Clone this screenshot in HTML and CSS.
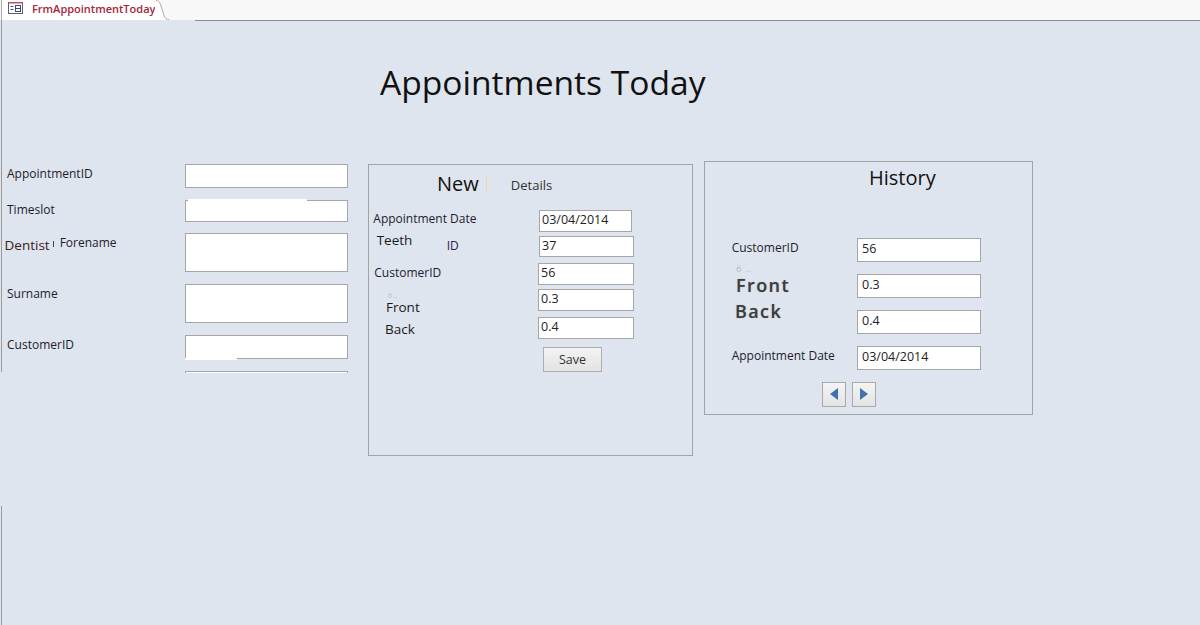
FILE: index.html
```html
<!DOCTYPE html>
<html lang="en">
<head>
<meta charset="utf-8">
<title>FrmAppointmentToday</title>
<link rel="stylesheet" href="styles.css">
</head>
<body>
<div class="tabbar">
  <div class="tab">
    <svg class="tab-icon" viewBox="0 0 15 12" width="15" height="12">
      <rect x="0.5" y="0.5" width="14" height="11" fill="#fff" stroke="#56607e"/>
      <line x1="0.5" y1="0.8" x2="14.5" y2="0.8" stroke="#c2506e" stroke-width="1.4"/>
      <line x1="2.5" y1="4.5" x2="5.5" y2="4.5" stroke="#3c4a6c"/>
      <line x1="2.5" y1="7.5" x2="5.5" y2="7.5" stroke="#3c4a6c"/>
      <rect x="7.5" y="3.5" width="5" height="6" fill="none" stroke="#3c4a6c"/>
      <line x1="7.5" y1="6.5" x2="12.5" y2="6.5" stroke="#3c4a6c"/>
    </svg>
    <span class="tab-label">FrmAppointmentToday</span>
  </div>
  <svg class="tab-edge" viewBox="0 0 14 20" width="14" height="20">
    <path d="M0 0 H1 C3.5 0 4.5 1.5 5.5 4.5 L9 15.5 C10 18.5 11.5 19.5 14 19.5 V20 H0 Z" fill="#fff"/>
    <path d="M1 0.5 C3.5 0.5 4.5 1.8 5.5 4.5 L9 15.5 C10 18.5 11.5 19.5 14 19.5" fill="none" stroke="#b3aa9c"/>
  </svg>
</div>

<div class="canvas">
  <h1 class="title">Appointments Today</h1>

  <div class="row">
    <div class="left">
      <div class="field">
        <div class="lbl">AppointmentID</div>
        <div class="box h24"></div>
      </div>
      <div class="field">
        <div class="lbl">Timeslot</div>
        <div class="box h22 patch-top"></div>
      </div>
      <div class="field gap11">
        <div class="lbl lbl-tight"><span class="dentist">Dentist</span><span class="tick"></span><span class="forename">Forename</span></div>
        <div class="box h39"></div>
      </div>
      <div class="field">
        <div class="lbl">Surname</div>
        <div class="box h39"></div>
      </div>
      <div class="field">
        <div class="lbl">CustomerID</div>
        <div class="box h24 patch-bottom"></div>
      </div>
      <div class="field">
        <div class="lbl"></div>
        <div class="box cut"></div>
      </div>
    </div>

    <div class="panel mid">
      <div class="mid-head">
        <span class="new">New</span>
        <span class="ybar"></span>
        <span class="details">Details</span>
      </div>
      <div class="mrow r-date">
        <div class="mlab"><span class="ml-date">Appointment Date</span></div>
        <div class="in mid-in w93 ml1">03/04/2014</div>
      </div>
      <div class="mrow r-id">
        <div class="mlab"><span class="teeth">Teeth</span><span class="id">ID</span></div>
        <div class="in mid-in w95 ml1">37</div>
      </div>
      <div class="mrow r-cust">
        <div class="mlab"><span class="ml-cust">CustomerID</span></div>
        <div class="in mid-in w96">56</div>
      </div>
      <div class="mrow r-front">
        <div class="mlab">
          <div class="mfront">
            <div class="dots">ö ..</div>
            <div class="big">Front</div>
          </div>
        </div>
        <div class="in mid-in w96">0.3</div>
      </div>
      <div class="mrow r-back">
        <div class="mlab"><span class="big mback">Back</span></div>
        <div class="in mid-in w96">0.4</div>
      </div>
      <div class="save">Save</div>
    </div>

    <div class="panel hist">
      <div class="hist-title">History</div>
      <div class="hrow">
        <div class="hlab"><span class="hl-cust">CustomerID</span></div>
        <div class="in hist-in">56</div>
      </div>
      <div class="hrow">
        <div class="hlab hl-front">
          <div class="hdots">ö ..</div>
          <div class="hbig">Front</div>
        </div>
        <div class="in hist-in">0.3</div>
      </div>
      <div class="hrow">
        <div class="hlab"><span class="hbig hl-back">Back</span></div>
        <div class="in hist-in">0.4</div>
      </div>
      <div class="hrow">
        <div class="hlab"><span class="hl-cust">Appointment Date</span></div>
        <div class="in hist-in">03/04/2014</div>
      </div>
      <div class="nav">
        <div class="navbtn"><svg viewBox="0 0 8 12" width="8" height="12"><polygon points="8,0 0,6 8,12" fill="#3f72b0"/></svg></div>
        <div class="navbtn"><svg viewBox="0 0 8 12" width="8" height="12"><polygon points="0,0 8,6 0,12" fill="#3f72b0"/></svg></div>
      </div>
    </div>
  </div>
</div>
</body>
</html>
```
FILE: styles.css
```css
* { box-sizing: border-box; }

body {
  margin: 0;
  width: 1200px;
  height: 625px;
  overflow: hidden;
  background: #dfe5ee;
  font-family: "Open Sans", "Noto Sans", sans-serif;
  color: #1f1f28;
}

/* ---------- tab bar ---------- */
.tabbar {
  height: 20px;
  background: #f8f8f8;
  display: flex;
}
.tab {
  margin-left: 1px;
  width: 154px;
  border-left: 1px solid #a9a9a9;
  background: #fff;
  display: flex;
  align-items: flex-start;
  padding-left: 6px;
}
.tab-icon { margin-top: 2px; flex-shrink: 0; }
.tab-label {
  margin-left: 9px;
  font-size: 11px;
  font-weight: 600;
  line-height: 18px;
  color: #a3263a;
  white-space: nowrap;
}
.tab-edge { display: block; flex-shrink: 0; }

/* ---------- form canvas ---------- */
.canvas {
  height: 605px;
  display: flex;
  flex-direction: column;
  background:
    linear-gradient(#8c8c8c, #8c8c8c) no-repeat 195px 0 / 1005px 1px,
    linear-gradient(to bottom, #9a9a9a 0 352px, transparent 352px 486px, #9a9a9a 486px) no-repeat 1px 0 / 1px 100%,
    #dfe5ee;
}
.title {
  margin: 42px 0 0 380px;
  font-size: 33.6px;
  font-weight: 400;
  line-height: 40px;
  color: #111;
}
.row {
  display: flex;
  align-items: flex-start;
  margin-top: 59px;
}

/* ---------- left column ---------- */
.left {
  margin-left: 4px;
  margin-top: 3px;
  width: 344px;
  display: flex;
  flex-direction: column;
}
.field { display: flex; align-items: flex-start; }
.field + .field { margin-top: 12px; }
.field.gap11 { margin-top: 11px; }
.lbl {
  width: 181px;
  flex-shrink: 0;
  padding-left: 3px;
  font-size: 12px;
  line-height: 20px;
  color: #1c1c2c;
  white-space: nowrap;
}
.lbl-tight { padding-left: 0; }
.dentist {
  font-size: 13.5px;
  color: #3a2020;
  vertical-align: -3px;
  margin-left: 0.5px;
}
.tick {
  display: inline-block;
  width: 1px;
  height: 6px;
  background: #444;
  margin-left: 3px;
}
.forename { margin-left: 6px; }

.box {
  width: 163px;
  background: #fff;
  border: 1px solid #a6a6a6;
  position: relative;
}
.h22 { height: 22px; }
.h24 { height: 24px; }
.h39 { height: 39px; }
.cut { height: 2px; border-bottom: none; }
.patch-top::before {
  content: "";
  position: absolute;
  top: -2px;
  left: 2px;
  width: 119px;
  height: 2px;
  background: #fff;
}
.patch-bottom::after {
  content: "";
  position: absolute;
  bottom: -2px;
  left: -1px;
  width: 52px;
  height: 2px;
  background: #fff;
}

/* ---------- panels ---------- */
.panel { border: 1px solid #a3a3a3; flex-shrink: 0; }

.mid {
  margin-left: 20px;
  margin-top: 3px;
  width: 325px;
  height: 292px;
  padding-top: 5px;
}
.mid-head {
  height: 40px;
  display: flex;
  align-items: baseline;
  padding-left: 68px;
}
.new { font-size: 20px; line-height: 28px; color: #111; }
.ybar {
  width: 1px;
  height: 14px;
  background: #e6da98;
  margin-left: 7px;
}
.details {
  margin-left: 24px;
  font-size: 13px;
  line-height: 18px;
  color: #333;
  position: relative;
  top: -1px;
}
.mrow { display: flex; align-items: flex-start; }
.r-date { height: 22px; margin-bottom: 4px; }
.r-id { height: 21px; margin-bottom: 6px; }
.r-cust { height: 22px; margin-bottom: 4px; }
.r-front { height: 22px; margin-bottom: 6px; }
.r-back { height: 22px; margin-bottom: 8px; }
.mlab {
  width: 169px;
  flex-shrink: 0;
  display: flex;
  align-items: flex-start;
  font-size: 12px;
  line-height: 18px;
  color: #1c1c2c;
  white-space: nowrap;
}
.ml-date { margin-left: 4.3px; }
.teeth {
  display: inline-block;
  width: 70px;
  margin-left: 7.7px;
  margin-top: -5px;
  font-size: 13.5px;
  color: #1a1a1a;
}
.id { margin-top: 1px; color: #2c1a4c; }
.ml-cust { margin-left: 5.3px; margin-top: 1px; }
.mfront { margin-left: 17px; }
.dots {
  margin-top: 3px;
  margin-left: 1.7px;
  height: 7px;
  font-size: 7px;
  line-height: 7px;
  color: #b8b8b8;
}
.big {
  font-size: 13.5px;
  line-height: 18px;
  color: #1a1a1a;
}
.mfront .big { margin-top: -1px; }
.mback { margin-left: 16px; margin-top: 3px; }

.in {
  background: #fff;
  border: 1px solid #a6a6a6;
  font-size: 12.5px;
  color: #222;
  white-space: nowrap;
}
.mid-in { height: 100%; line-height: 18px; padding-left: 2px; }
.w93 { width: 93px; }
.w95 { width: 95px; }
.w96 { width: 96px; }
.ml1 { margin-left: 1px; }

.save {
  margin-left: 174px;
  width: 59px;
  height: 25px;
  border: 1px solid #adadad;
  background: linear-gradient(#f3f3f3, #e3e3e3);
  font-size: 12.5px;
  line-height: 23px;
  text-align: center;
  color: #333;
}

.hist {
  margin-left: 11px;
  width: 329px;
  height: 254px;
  padding-top: 1.5px;
}
.hist-title {
  height: 28px;
  margin-bottom: 46px;
  padding-left: 164px;
  font-size: 20px;
  line-height: 28px;
  color: #111;
}
.hrow {
  display: flex;
  align-items: flex-start;
  height: 24px;
  margin-bottom: 12px;
}
.hlab {
  width: 152px;
  flex-shrink: 0;
  display: flex;
  flex-direction: column;
  align-items: flex-start;
  font-size: 12px;
  line-height: 18px;
  color: #1c1c2c;
  white-space: nowrap;
}
.hl-cust { margin-left: 26.7px; margin-top: 1px; }
.hl-front { padding-left: 31px; }
.hdots {
  margin-top: -10px;
  height: 10px;
  font-size: 9px;
  line-height: 10px;
  letter-spacing: 1px;
  color: #b4b4b4;
}
.hbig {
  font-size: 18px;
  font-weight: 600;
  line-height: 22px;
  letter-spacing: 1.4px;
  color: #3e3e3e;
  text-shadow: 0 0 1px rgba(60, 60, 60, 0.45);
}
.hl-back { margin-left: 30px; margin-top: -10px; }
.hist-in {
  width: 124px;
  height: 24px;
  line-height: 20px;
  padding-left: 4px;
}
.nav {
  display: flex;
  gap: 6px;
  margin-top: 8px;
  padding-left: 117px;
}
.navbtn {
  width: 24px;
  height: 25px;
  border: 1px solid #a9a9a9;
  background: linear-gradient(#f4f4f4, #e4e4e4);
  display: flex;
  align-items: center;
  justify-content: center;
}
.navbtn svg { display: block; }
```
